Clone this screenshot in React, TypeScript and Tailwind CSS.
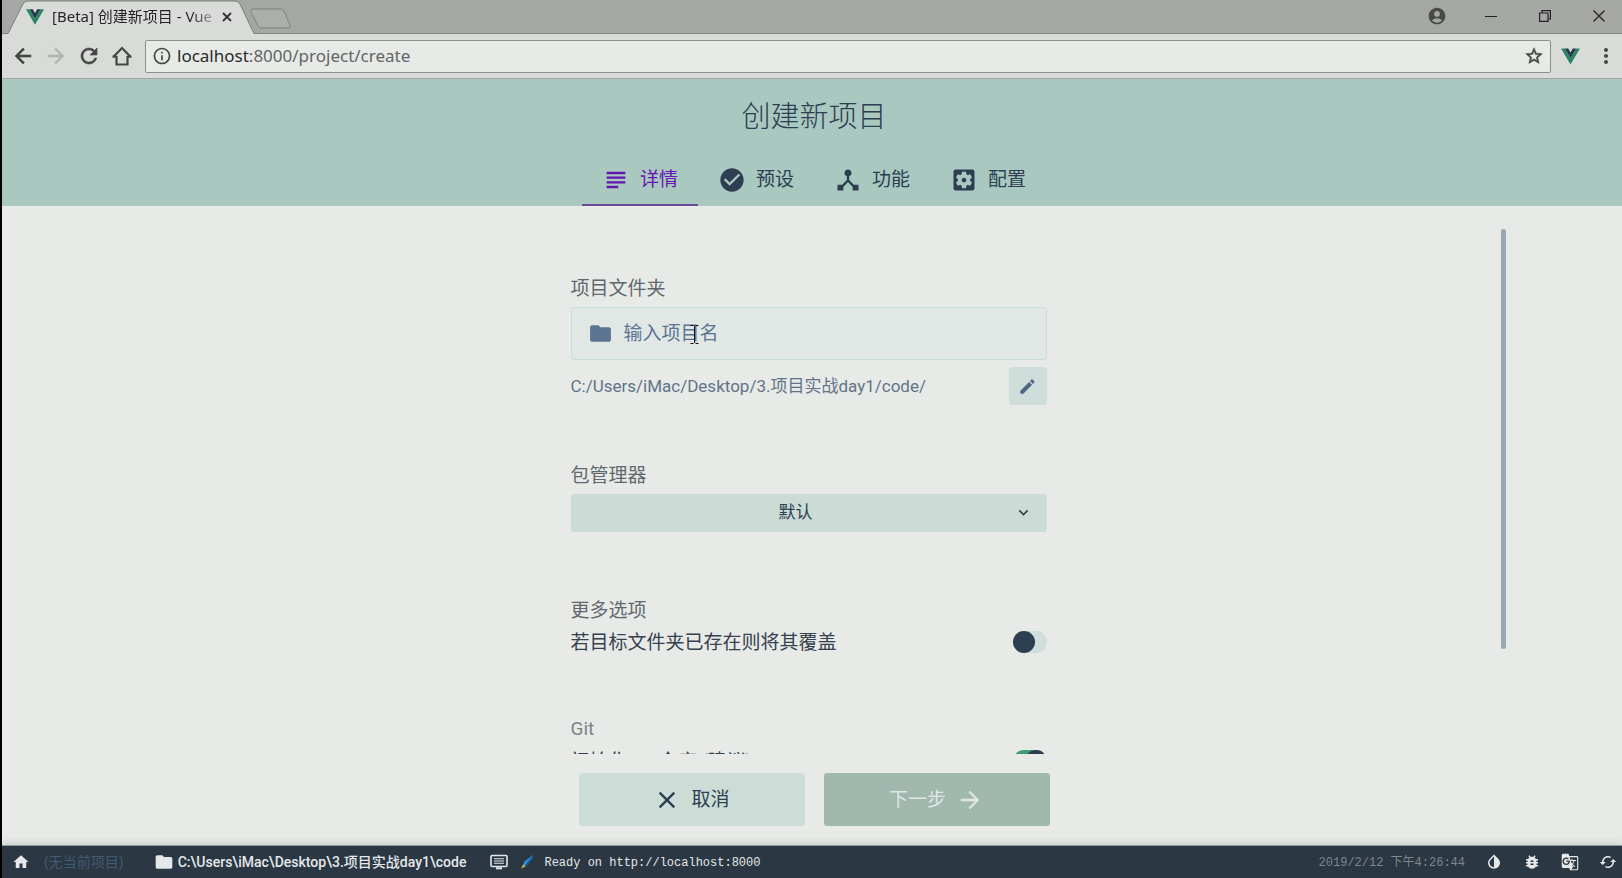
import React, { useState } from 'react';
import {
  MdAccountCircle,
  MdArrowBack,
  MdArrowForward,
  MdBugReport,
  MdCached,
  MdCheckCircle,
  MdClose,
  MdDeviceHub,
  MdEdit,
  MdFolder,
  MdGTranslate,
  MdHome,
  MdInvertColors,
  MdKeyboardArrowDown,
  MdMoreVert,
  MdOutlineInfo,
  MdRefresh,
  MdSettingsApplications,
  MdStarBorder,
  MdSubject,
} from 'react-icons/md';

const VueLogo: React.FC<{ className?: string }> = ({ className }) => (
  <svg viewBox="0 0 20 17" className={className} aria-hidden="true">
    <path d="M0 0h4l6 10.2L16 0h4L10 17z" fill="#2a8565" />
    <path d="M4 0h3.6L10 4.2 12.4 0H16l-6 10.2z" fill="#26394a" />
  </svg>
);

const TitleBar: React.FC = () => (
  <div className="relative flex h-[34px] shrink-0 items-end justify-between border-b border-[#858785] bg-[#a5a7a4]">
    <div className="flex items-end">
      <div className="relative -mb-px ml-1 h-[34px] w-[252px]">
        <svg viewBox="0 0 252 34" className="absolute inset-0 h-full w-full" aria-hidden="true">
          <path d="M2 34 L17 4 Q19 1 22 1 H229 Q232 1 234 4 L248 34 Z" fill="#d9dbd9" />
          <path d="M0 33.500 H2 L17 4 Q19 1 22 1 H229 Q232 1 234 4 L248 33.500 H252" fill="none" stroke="#7d7f7d" />
        </svg>
        <div className="relative flex h-full items-center pl-5">
          <VueLogo className="h-4 w-[18px]" />
          <span className="ml-2 w-[162px] whitespace-nowrap bg-linear-to-r from-[#222] from-85% to-[#aaa] bg-clip-text pb-0.5 text-[15px] text-transparent">
            [Beta] 创建新项目 - Vue
          </span>
          <button type="button" aria-label="Close tab" className="ml-2 text-[#333]">
            <svg viewBox="0 0 10 10" className="h-[10px] w-[10px]">
              <path d="M1 1l8 8M9 1l-8 8" stroke="currentColor" strokeWidth="1.8" />
            </svg>
          </button>
        </div>
      </div>
      <button type="button" aria-label="New tab" className="-ml-2 mb-1">
        <svg viewBox="0 0 42 21" className="h-[21px] w-[42px]">
          <path d="M3 1h28q2 0 3 2l6 14q1 3-2 3H11q-2 0-3-2L1 4q-1-3 2-3z" fill="#acaeab" stroke="#7f817f" />
        </svg>
      </button>
    </div>
    <div className="flex h-full items-center pb-0.5 text-[#222]">
      <button type="button" aria-label="Profile" className="flex w-[54px] justify-center text-[#484a48]">
        <MdAccountCircle className="h-5 w-5" />
      </button>
      <button type="button" aria-label="Minimize" className="flex w-[54px] justify-center">
        <svg viewBox="0 0 12 12" className="h-3 w-3">
          <path d="M0 6.500h12" stroke="currentColor" />
        </svg>
      </button>
      <button type="button" aria-label="Restore" className="flex w-[54px] justify-center">
        <svg viewBox="0 0 12 12" className="h-3 w-3" fill="none" stroke="currentColor" strokeWidth="1.2">
          <path d="M.6 3h8.400v8.400H.6zM3 3V.6h8.400V9H9" />
        </svg>
      </button>
      <button type="button" aria-label="Close" className="flex w-[50px] justify-center pl-1">
        <svg viewBox="0 0 12 12" className="h-3 w-3">
          <path d="M.5.5l11 11M11.500.5l-11 11" stroke="currentColor" strokeWidth="1.3" />
        </svg>
      </button>
    </div>
  </div>
);

const Toolbar: React.FC = () => (
  <div className="flex h-[45px] shrink-0 items-center border-b border-[#a2a4a2] bg-[#d9dbd9] pl-[9px] text-[#454745]">
    <div className="flex items-center gap-[9px]">
      <button type="button" aria-label="Back">
        <MdArrowBack className="h-6 w-6 [&>path[fill=none]]:stroke-none" strokeWidth="0.6" />
      </button>
      <button type="button" aria-label="Forward" disabled className="text-[#b4b6b4]">
        <MdArrowForward className="h-6 w-6 [&>path[fill=none]]:stroke-none" strokeWidth="0.6" />
      </button>
      <button type="button" aria-label="Reload">
        <MdRefresh className="h-6 w-6 [&>path[fill=none]]:stroke-none" strokeWidth="0.6" />
      </button>
      <button type="button" aria-label="Home">
        <svg viewBox="0 0 24 24" className="h-6 w-6" fill="none" stroke="currentColor" strokeWidth="2.2">
          <path d="M6.500 12v8.500h11V12M3.500 12.700L12 4l8.500 8.700M2.500 12.700h4M17.500 12.700h4" />
        </svg>
      </button>
    </div>
    <div className="ml-[11px] flex h-[33px] flex-1 items-center rounded-xs border border-[#8f918f] bg-[#e7eae7] pl-1.5 pr-1.5">
      <MdOutlineInfo className="h-5 w-5" />
      <span className="ml-[5px] flex-1 text-[17px] text-[#636563]">
        <span className="text-[#2a2c2a]">localhost</span>:8000/project/create
      </span>
      <button type="button" aria-label="Bookmark this page">
        <MdStarBorder className="h-5 w-5 [&>path[fill=none]]:stroke-none" strokeWidth="0.6" />
      </button>
    </div>
    <VueLogo className="ml-[10px] h-[17px] w-[19px]" />
    <button type="button" aria-label="Menu" className="ml-3.5 mr-1">
      <MdMoreVert className="h-6 w-6" />
    </button>
  </div>
);

const tabs = [
  { id: 'details', label: '详情', icon: MdSubject },
  { id: 'presets', label: '预设', icon: MdCheckCircle },
  { id: 'features', label: '功能', icon: MdDeviceHub },
  { id: 'config', label: '配置', icon: MdSettingsApplications },
];

interface HeaderProps {
  active: string;
  onSelect: (id: string) => void;
}

const Header: React.FC<HeaderProps> = ({ active, onSelect }) => (
  <header className="shrink-0 bg-[#a9c8c0] pl-1 text-[#2c3e50]">
    <h1 className="flex h-[75px] items-center justify-center pt-0.5 text-[29px] font-light">创建新项目</h1>
    <div role="tablist" className="flex justify-center">
      {tabs.map(({ id, label, icon: Icon }) => (
        <button
          key={id}
          type="button"
          role="tab"
          aria-selected={active === id}
          onClick={() => onSelect(id)}
          className={`flex h-[52px] items-center gap-[10px] border-b-2 px-5 pt-0.5 text-[19px] ${
            active === id ? 'border-[#6a4a94] text-[#6515b0]' : 'border-transparent'
          }`}
        >
          <Icon className="h-7 w-7" />
          <span className="pt-px">{label}</span>
        </button>
      ))}
    </div>
  </header>
);

interface SwitchProps {
  id: string;
  label: string;
  checked: boolean;
  onChange: (value: boolean) => void;
}

const Switch: React.FC<SwitchProps> = ({ id, label, checked, onChange }) => (
  <div className="flex h-8 items-center justify-between">
    <label htmlFor={id} className="pt-0.5 text-[19px] text-[#35414d]">
      {label}
    </label>
    <input
      id={id}
      type="checkbox"
      role="switch"
      checked={checked}
      onChange={(e) => onChange(e.target.checked)}
      className="h-[22px] w-[34px] appearance-none rounded-full bg-[#cfdedb] before:block before:h-[22px] before:w-[22px] before:rounded-full before:bg-[#2c3e50] checked:bg-[#3f9a7a] checked:before:ml-3"
    />
  </div>
);

const DetailsForm: React.FC = () => {
  const [name, setName] = useState('');
  const [overwrite, setOverwrite] = useState(false);
  const [git, setGit] = useState(true);

  return (
    <form className="mx-auto w-[476px] pt-[43px] text-[#5f686e]">
      <label htmlFor="folder" className="flex h-8 items-center pt-0.5 text-[19px]">
        项目文件夹
      </label>
      <div className="relative mt-[3px] flex h-[53px] items-center rounded-[3px] border border-[#c9dcd6] bg-[#e0e7e4] pl-4 text-[#5b7492]">
        <MdFolder className="h-[25px] w-[25px]" />
        <input
          id="folder"
          type="text"
          value={name}
          onChange={(e) => setName(e.target.value)}
          placeholder="输入项目名"
          className="ml-[11px] flex-1 bg-transparent pt-0.5 text-[19px] outline-none placeholder:text-[#5b7492]"
        />
        <svg viewBox="0 0 9 19" className="absolute left-[118px] top-[17px] h-[19px] w-[9px]" fill="none" stroke="#111" aria-hidden="true">
          <path d="M.5.500h3M5.500.500h3M.5 18.500h3M5.500 18.500h3M4.500 1v17" />
        </svg>
      </div>
      <div className="mt-[7px] flex h-[38px] items-center justify-between">
        <span className="pt-0.5 text-[17px] text-[#637488]">C:/Users/iMac/Desktop/3.项目实战day1/code/</span>
        <button
          type="button"
          aria-label="Edit folder"
          className="flex h-[38px] w-[38px] items-center justify-center rounded-[3px] bg-[#cfdedb] text-[#4f6780]"
        >
          <MdEdit className="h-[19px] w-[19px]" />
        </button>
      </div>

      <label htmlFor="manager" className="mt-[54px] flex h-8 items-center pt-0.5 text-[19px]">
        包管理器
      </label>
      <div className="relative mt-[3px]">
        <select
          id="manager"
          className="block h-[38px] w-full appearance-none rounded-[3px] bg-[#cadcd5] pr-[26px] text-center text-[17px] text-[#2c3e50] [text-align-last:center]"
        >
          <option>默认</option>
        </select>
        <MdKeyboardArrowDown className="pointer-events-none absolute right-[14px] top-[9px] h-[19px] w-[19px] text-[#2c3e50]" />
      </div>

      <h2 className="mt-[62px] flex h-8 items-center pt-0.5 text-[19px]">更多选项</h2>
      <Switch id="overwrite" label="若目标文件夹已存在则将其覆盖" checked={overwrite} onChange={setOverwrite} />

      <h2 className="mt-[55px] flex h-8 items-center text-[19px] text-[#7d8488]">Git</h2>
      <Switch id="git" label="初始化 git 仓库 (建议)" checked={git} onChange={setGit} />
    </form>
  );
};

const StatusBar: React.FC = () => (
  <footer className="relative flex h-[33px] shrink-0 items-center border-t border-[#8d9a9b] bg-[#2b3742] pl-[10px] pr-[5px] text-[#e4e8ea] shadow-[0_-2px_8px_rgba(0,0,0,0.12)]">
    <a href="#home" aria-label="Home">
      <MdHome className="h-[18px] w-[18px]" />
    </a>
    <span className="ml-3.5 text-sm text-[#435a73]">(无当前项目)</span>
    <MdFolder className="ml-[30px] h-5 w-5" />
    <span className="ml-1 text-sm font-medium">C:\Users\iMac\Desktop\3.项目实战day1\code</span>
    <button type="button" aria-label="Toggle log" className="ml-6">
      <svg viewBox="0 0 18 16" className="h-4 w-[18px]" fill="none" stroke="currentColor">
        <rect x="1" y="1.500" width="16" height="11" rx="1" strokeWidth="1.6" />
        <path d="M4 4.700h10M4 7h10M4 9.300h10" strokeWidth="1.1" />
        <path d="M6 14.300h6" strokeWidth="2" />
      </svg>
    </button>
    <svg viewBox="0 0 14 16" className="ml-3 h-4 w-3.5" aria-hidden="true">
      <path d="M13 1L4.500 7.500 3 11l2.500 1.500L12 5z" fill="#2f8fd8" />
      <path d="M13 1l-1 4-6.500 7.500L4.500 12z" fill="#165a9c" />
      <path d="M3.500 10L1 14.500l4.500-2z" fill="#c9b25c" />
    </svg>
    <span className="ml-[10px] flex-1 pt-0.5 font-['Liberation_Mono','Noto_Sans_CJK_SC',monospace] text-xs">
      Ready on http://localhost:8000
    </span>
    <time className="pt-0.5 font-['Liberation_Mono','Noto_Sans_CJK_SC',monospace] text-xs text-[#7d878e]">
      2019/2/12 下午4:26:44
    </time>
    <div className="ml-5 flex items-center gap-5">
      <button type="button" aria-label="Toggle dark mode">
        <MdInvertColors className="h-[18px] w-[18px]" />
      </button>
      <button type="button" aria-label="Report a bug">
        <MdBugReport className="h-[18px] w-[18px]" />
      </button>
      <button type="button" aria-label="Translate">
        <MdGTranslate className="h-[18px] w-[18px]" />
      </button>
      <button type="button" aria-label="Refresh">
        <MdCached className="h-[18px] w-[18px]" />
      </button>
    </div>
  </footer>
);

const App: React.FC = () => {
  const [active, setActive] = useState('details');

  return (
    <div className="flex h-screen flex-col overflow-hidden border-l-2 border-black bg-[#e7eae7]">
      <div className="font-['Noto_Sans','Noto_Sans_CJK_SC',sans-serif]">
        <TitleBar />
        <Toolbar />
      </div>
      <div className="flex min-h-0 flex-1 flex-col font-['Roboto','Noto_Sans_CJK_SC',sans-serif]">
        <Header active={active} onSelect={setActive} />
        <main className="flex min-h-0 flex-1 flex-col pl-1">
          <div className="mx-auto flex min-h-0 w-full max-w-[1384px] flex-1 pt-[23px]">
            <div className="min-w-0 flex-1 overflow-hidden">
              <DetailsForm />
            </div>
            <div className="flex w-[11px] justify-end">
              <div className="h-4/5 w-[5px] rounded-full bg-[#99a8b1]" />
            </div>
          </div>
          <div className="flex shrink-0 justify-center gap-[19px] py-[19px] text-[19px]">
            <button
              type="button"
              className="flex h-[53px] w-[226px] items-center justify-center gap-[10px] rounded-[3px] bg-[#ccddd7] text-[#2c3e50]"
            >
              <MdClose className="h-7 w-7" />
              <span className="pt-0.5">取消</span>
            </button>
            <button
              type="button"
              disabled
              className="flex h-[53px] w-[226px] items-center justify-center gap-[10px] rounded-[3px] bg-[#a1b8ae] text-[#dfe7e3]"
            >
              <span className="pt-0.5">下一步</span>
              <MdArrowForward className="h-7 w-7" />
            </button>
          </div>
        </main>
        <StatusBar />
      </div>
    </div>
  );
};

export default App;
